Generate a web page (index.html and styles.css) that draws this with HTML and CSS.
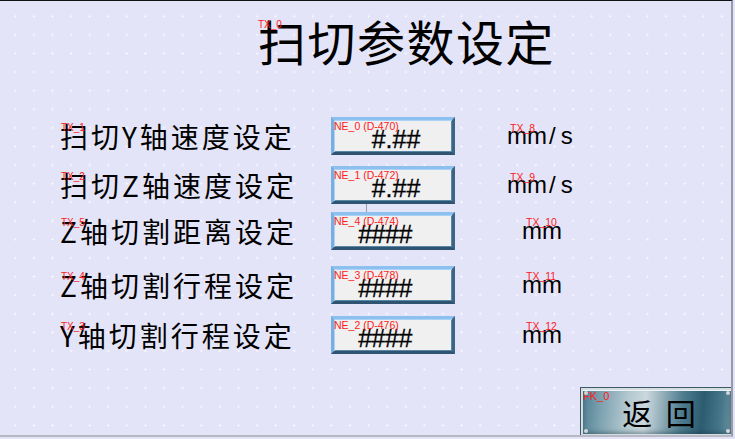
FILE: index.html
```html
<!DOCTYPE html>
<html lang="zh">
<head>
<meta charset="utf-8">
<title>扫切参数设定</title>
<link rel="stylesheet" href="styles.css">
</head>
<body>
<div class="screen">
  <div class="title-wrap">
    <h1 class="title">扫切参数设定<span class="tag tag-title">TX_0</span></h1>
  </div>

  <div class="rows">
    <div class="row">
      <div class="label">扫切Y轴速度设定<span class="tag tag-label">TX_1</span></div>
      <div class="box">
        <span class="tag tag-box">NE_0 (D-470)</span>
        <span class="val">#.##</span>
      </div>
      <div class="unit unit-s">mm<span class="slash">/</span>s<span class="tag tag-unit">TX_8</span></div>
    </div>
    <div class="row row-2">
      <div class="label">扫切Z轴速度设定<span class="tag tag-label">TX_2</span></div>
      <div class="box">
        <span class="tag tag-box">NE_1 (D-472)</span>
        <span class="val">#.##</span>
        <span class="link"></span>
      </div>
      <div class="unit unit-s">mm<span class="slash">/</span>s<span class="tag tag-unit">TX_9</span></div>
    </div>
    <div class="row row-3">
      <div class="label">Z轴切割距离设定<span class="tag tag-label">TX_5</span></div>
      <div class="box">
        <span class="tag tag-box">NE_4 (D-474)</span>
        <span class="val val-int">####</span>
      </div>
      <div class="unit unit-m">mm<span class="tag tag-unit">TX_10</span></div>
    </div>
    <div class="row row-4">
      <div class="label">Z轴切割行程设定<span class="tag tag-label">TX_4</span></div>
      <div class="box">
        <span class="tag tag-box">NE_3 (D-478)</span>
        <span class="val val-int">####</span>
      </div>
      <div class="unit unit-m">mm<span class="tag tag-unit">TX_11</span></div>
    </div>
    <div class="row row-5">
      <div class="label">Y轴切割行程设定<span class="tag tag-label">TX_3</span></div>
      <div class="box">
        <span class="tag tag-box">NE_2 (D-476)</span>
        <span class="val val-int">####</span>
      </div>
      <div class="unit unit-m">mm<span class="tag tag-unit">TX_12</span></div>
    </div>
  </div>

  <div class="footer">
    <button class="back">
      <span class="tag tag-btn">FK_0</span>
      <span class="screw s-tl"></span><span class="screw s-tr"></span><span class="screw s-bl"></span><span class="screw s-br"></span>
      <span class="back-text">返&nbsp;&nbsp;回</span>
    </button>
  </div>
</div>
</body>
</html>
```

FILE: styles.css
```css
html, body {
  margin: 0;
  padding: 0;
  background: #e4e4f8;
}

.screen {
  position: relative;
  width: 733px;
  height: 437px;
  box-sizing: border-box;
  border-top: 1px solid #111;
  border-right: 2px solid #9a9aa4;
  border-bottom: 2px solid #b8b8c4;
  background-color: #e4e4f8;
  background-image: radial-gradient(circle, rgba(255,255,255,0.9) 0.8px, transparent 1.2px);
  background-size: 18.6px 18.6px;
  background-position: 6px 6px;
  font-family: "Noto Sans CJK SC", "Noto Sans", sans-serif;
  color: #000;
  overflow: hidden;
  display: flex;
  flex-direction: column;
}

.title-wrap {
  padding: 11px 0 0 258px;
  height: 116px;
  box-sizing: border-box;
}

.title {
  position: relative;
  margin: 0;
  font-weight: normal;
  font-size: 48px;
  line-height: 56px;
  letter-spacing: 1.5px;
}

.tag {
  position: absolute;
  color: #ff2020;
  font-family: "Liberation Sans", Arial, sans-serif;
  font-size: 10px;
  line-height: 10px;
  letter-spacing: 0;
  font-weight: normal;
  white-space: nowrap;
}

.tag-title { left: 0; top: 8px; }

.rows {
  display: flex;
  flex-direction: column;
}

.row {
  display: flex;
  align-items: center;
  height: 38px;
}
.row-2 { margin-top: 11px; }
.row-3 { margin-top: 8px; }
.row-4 { margin-top: 16px; }
.row-5 { margin-top: 12px; }

.label {
  position: relative;
  width: 271px;
  padding-left: 60px;
  font-size: 28px;
  letter-spacing: 3px;
  line-height: 38px;
  white-space: nowrap;
}
.tag-label { left: 61px; top: 6px; }

.box {
  position: relative;
  width: 124px;
  height: 38px;
  box-sizing: border-box;
  border: 3px solid;
  border-color: #8cc0ee #3c6584 #2f5472 #79aee0;
  background: #f0f0f0;
  box-shadow: inset 1px 1px 0 #a9d2f6, inset -1px -1px 0 #5a86a8;
  display: flex;
  justify-content: center;
  align-items: flex-end;
}
.tag-box { left: 0; top: 1px; font-size: 10.5px; }

.val {
  font-family: "Liberation Sans", Arial, sans-serif;
  font-size: 25px;
  line-height: 26px;
  padding-left: 6px;
  -webkit-text-stroke: 0.3px #000;
}
.val-int {
  padding-left: 0;
  margin-right: 16px;
  letter-spacing: -0.5px;
}

.link {
  position: absolute;
  left: 32px;
  top: 35px;
  width: 1px;
  height: 8px;
  background: #9a9aa4;
}

.unit {
  position: relative;
  font-family: "Liberation Sans", Arial, sans-serif;
  font-size: 24px;
  line-height: 30px;
}
.unit-s { margin-left: 52px; }
.unit-m { margin-left: 67px; }
.slash { margin: 0 5px 0 2px; font-weight: 300; }
.tag-unit { left: 3px; top: 2px; font-size: 10.5px; }
.unit-m .tag-unit { left: 4px; top: 1px; }

.footer {
  margin-top: auto;
  display: flex;
  justify-content: flex-end;
}

.back {
  position: relative;
  width: 152px;
  height: 48px;
  margin-right: -2px;
  margin-bottom: -1px;
  padding: 0;
  border: 2px solid #d4dde2;
  outline: 1px solid #3d5a66;
  background: linear-gradient(95deg, #4f7f92 0%, #7aa0af 12%, #b3c8d0 30%, #cbd8dd 42%, #98b2bd 52%, #4f7d90 66%, #2c5c70 80%, #46768a 92%, #6a91a0 100%);
  box-shadow: inset 0 1px 0 #eef3f5, inset 0 -2px 4px rgba(20,50,60,0.4);
  font-family: "Noto Sans CJK SC", sans-serif;
  cursor: pointer;
}
.back-text {
  display: block;
  font-size: 30px;
  line-height: 44px;
  color: #000;
  padding-left: 4px;
}
.tag-btn { left: 0; top: 1px; font-size: 11px; }

.screw {
  position: absolute;
  width: 4px;
  height: 4px;
  border-radius: 50%;
  background: #cfd6d9;
}
.s-tl { left: 1px; top: 1px; }
.s-tr { right: 1px; top: 1px; }
.s-bl { left: 1px; bottom: 1px; }
.s-br { right: 1px; bottom: 1px; }
```
